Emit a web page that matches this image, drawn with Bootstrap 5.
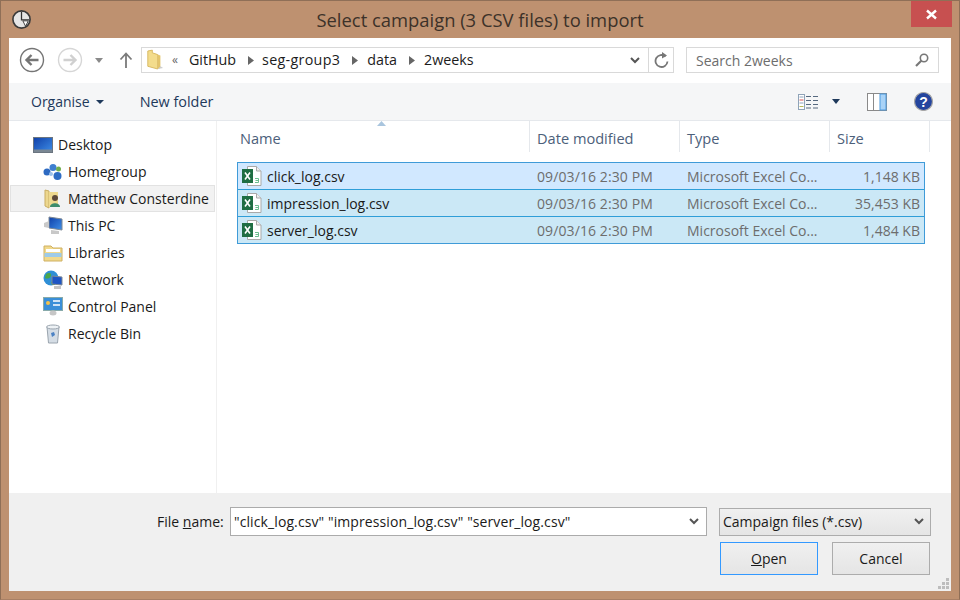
<!DOCTYPE html>
<html lang="en">
<head>
<meta charset="UTF-8">
<title>Select campaign (3 CSV files) to import</title>
<link href="https://cdn.jsdelivr.net/npm/bootstrap@5.3.0/dist/css/bootstrap.min.css" rel="stylesheet">
<style>
html, body { width: 960px; height: 600px; overflow: hidden; }
body { background: #be9170; font-family: "Open Sans", "Noto Sans", sans-serif; font-size: 14px; color: #1a1a1a; }
svg { display: block; flex: none; }
.win-frame { width: 960px; height: 600px; border: 1px solid #8f6f57; border-bottom-color: #a88065; padding: 0 8px 8px; }
.title-bar { height: 37px; }
.app-icon { margin-left: 3px; margin-top: 9px; }
.title-text { font-size: 18.4px; color: #3c3129; line-height: 37px; padding-left: 18px; }
.close-btn { width: 41px; height: 26px; background: #c75050; margin-right: -1px; align-self: flex-start; }
.client { width: 942px; height: 553px; background: #fff; }
.addr-row { height: 45px; padding: 9px 12px 0 10px; }
.nav-btns { width: 122px; height: 26px; }
.nav-fwd, .nav-drop { margin-left: 12px; }
.nav-up { margin-left: 16px; }
.addr-box { width: 533px; height: 26px; border: 1px solid #d9d9d9; }
.crumbs { font-size: 14.3px; color: #1c1c1c; padding-left: 3px; }
.crumb-sep { color: #666; font-size: 12px; margin: 0 11px 0 5px; }
.crumb-arrow { margin: 0 9px 0 12px; }
.crumb-first { margin-right: 8px; }
.crumb-wide { letter-spacing: .3px; }
.refresh-cell { width: 25px; height: 24px; border-left: 1px solid #d9d9d9; }
.search-box { width: 253px; height: 26px; margin-left: 12px; border: 1px solid #d9d9d9; color: #6d6d6d; padding: 0 9px; }
.tool-row { height: 38px; background: #f5f6f7; border-bottom: 1px solid #e5e8ec; padding: 0 18px 0 22px; color: #1e395b; }
.tool-caret { border-left: 4px solid transparent; border-right: 4px solid transparent; border-top: 4px solid #1e395b; margin-left: 6px; }
.tool-new { margin-left: 36px; font-size: 14.4px; }
.view-caret { margin-left: 14px; }
.pane-btn { margin-left: 27px; }
.help-btn { margin-left: 27px; }
.main-area { height: 372px; }
.side-nav { width: 208px; border-right: 1px solid #f0f0f0; padding-top: 10px; }
.side-item { height: 27px; padding-left: 32px; gap: 5px; margin-left: 1px; width: 205px; border: 1px solid transparent; }
.side-top { padding-left: 22px; }
.side-on { background: #f2f2f2; border-color: #e2e2e2; }
.file-pane { padding-left: 14px; }
.col-heads { height: 31px; color: #4c607a; font-size: 14.6px; }
.head-cell { height: 31px; padding-left: 7px; border-right: 1px solid #e5e8ec; position: relative; line-height: 34px; }
.cw-name { width: 299px; padding-left: 9px; }
.cw-date { width: 150px; }
.cw-type { width: 150px; }
.cw-size { width: 100px; }
.sort-arrow { position: absolute; left: 146px; top: 0; }
.file-list { margin-top: 10px; margin-left: 6px; width: 688px; border: 1px solid #3f9bd8; }
.file-row { height: 27px; border-top: 1px solid #2f9ed8; background: #cbe8f6; }
.file-row:first-child { background: #d1e8ff; border-top: 0; height: 26px; }
.f-name { width: 299px; padding-left: 4px; gap: 5px; color: #1a1a1a; }
.f-date { width: 150px; color: #6d6d6d; letter-spacing: .1px; }
.f-type { width: 137px; color: #6d6d6d; white-space: nowrap; }
.f-size { width: 94px; color: #6d6d6d; text-align: right; padding-right: 4px; }
.foot-area { height: 98px; background: #f0f0f0; padding: 14px 20px 0 148px; position: relative; }
.fname-label { width: 73px; white-space: nowrap; }
.fname-box { width: 477px; height: 29px; background: #fff; border: 1px solid #ababab; padding: 0 7px 0 3px; white-space: nowrap; letter-spacing: .1px; }
.type-box { width: 212px; height: 28px; margin-left: 12px; border: 1px solid #acacac; background: linear-gradient(#f0f0f0, #e5e5e5); padding: 0 6px 0 3px; }
.btn-row { margin-top: 6px; padding-right: 1px; gap: 14px; }
.dlg-btn { width: 98px; height: 33px; border: 1px solid #acacac; background: linear-gradient(#f0f0f0, #e5e5e5); color: #1a1a1a; font-size: 14px; padding: 0; border-radius: 0; }
.dlg-btn:hover { border-color: #acacac; background: linear-gradient(#f0f0f0, #e5e5e5); color: #1a1a1a; }
.dlg-default { border: 1px solid #3399ff; }
.grip { position: absolute; right: 2px; bottom: 2px; }
</style>
</head>
<body>
<svg width="0" height="0" class="position-absolute">
  <defs>
    <linearGradient id="screen" x1="0" y1="0" x2="1" y2="1"><stop offset="0" stop-color="#0f3fa8"/><stop offset="1" stop-color="#3f8fe8"/></linearGradient>
    <symbol id="xl" viewBox="0 0 20 20">
      <path d="M5.5 .5H14.5L19 5V19.500H5.500Z" fill="#fff" stroke="#a9a9a9"/>
      <path d="M14.500 .5V5H19" fill="#eee" stroke="#a9a9a9"/>
      <rect x="0" y="3" width="11" height="14" fill="#1f6e43"/>
      <path d="M3 6.500L8 13.500M8 6.500L3 13.500" stroke="#fff" stroke-width="1.600"/>
      <path d="M13 12.500h3.500v4h-3.500M16.500 14.500h-3" fill="none" stroke="#6cbd8f"/>
    </symbol>
    <symbol id="folder-plain" viewBox="0 0 20 24">
      <path d="M2 2 7 1V4L13 6V22L2 19Z" fill="#f3dc8c" stroke="#d6b65c"/>
      <path d="M7 4 16 7V21L13 22V6Z" fill="#e3c46b"/>
      <path d="M13 22 19 21 16 19Z" fill="#ccc"/>
    </symbol>
  </defs>
</svg>

<div class="win-frame">
  <div class="title-bar d-flex">
    <svg class="app-icon" width="19" height="19" viewBox="0 0 21 21">
      <circle cx="10.500" cy="10.500" r="9.500" fill="#e6e6e6" stroke="#3a3a3a" stroke-width="1.800"/>
      <path d="M10.500 2V11H19" fill="none" stroke="#333" stroke-width="1.400"/>
      <path d="M12 12H18L15 18Z" fill="#fff" stroke="#333"/>
    </svg>
    <div class="title-text flex-grow-1 text-center">Select campaign (3 CSV files) to import</div>
    <div class="close-btn d-flex align-items-center justify-content-center">
      <svg width="11" height="11" viewBox="0 0 11 11"><path d="M1 1.500 10 9.500M10 1.500 1 9.500" stroke="#fff" stroke-width="2.400"/></svg>
    </div>
  </div>

  <div class="client d-flex flex-column">
    <div class="addr-row d-flex">
      <div class="nav-btns d-flex align-items-center">
        <svg width="26" height="26" viewBox="0 0 26 26">
          <circle cx="13" cy="13" r="11.500" fill="#fff" stroke="#757575" stroke-width="1.400"/>
          <path d="M19.500 13H8M12.500 8 7.500 13 12.500 18" fill="none" stroke="#757575" stroke-width="2.400"/>
        </svg>
        <svg class="nav-fwd" width="26" height="26" viewBox="0 0 26 26">
          <circle cx="13" cy="13" r="11.500" fill="#fff" stroke="#d6d6d6" stroke-width="1.400"/>
          <path d="M6.500 13H18M13.500 8 18.500 13 13.500 18" fill="none" stroke="#d0d0d0" stroke-width="2.400"/>
        </svg>
        <svg class="nav-drop" width="8" height="5" viewBox="0 0 8 5"><path d="M0 0H8L4 5Z" fill="#8a8a8a"/></svg>
        <svg class="nav-up" width="14" height="16" viewBox="0 0 14 16"><path d="M7 16V2M1.500 7.500 7 1.500 12.500 7.500" fill="none" stroke="#7a7a7a" stroke-width="1.800"/></svg>
      </div>
      <div class="addr-box d-flex align-items-center">
        <svg class="ms-1" width="18" height="24" viewBox="0 0 20 24"><use href="#folder-plain"/></svg>
        <div class="crumbs d-flex align-items-center flex-grow-1">
          <span class="crumb-sep">«</span><span>GitHub</span>
          <svg class="crumb-arrow crumb-first" width="6" height="9" viewBox="0 0 6 9"><path d="M0 0 6 4.500 0 9Z" fill="#666"/></svg><span class="crumb-wide">seg-group3</span>
          <svg class="crumb-arrow" width="6" height="9" viewBox="0 0 6 9"><path d="M0 0 6 4.500 0 9Z" fill="#666"/></svg><span>data</span>
          <svg class="crumb-arrow" width="6" height="9" viewBox="0 0 6 9"><path d="M0 0 6 4.500 0 9Z" fill="#666"/></svg><span>2weeks</span>
        </div>
        <svg class="me-2" width="10" height="7" viewBox="0 0 10 7"><path d="M1 1 5 5 9 1" fill="none" stroke="#555" stroke-width="2"/></svg>
        <div class="refresh-cell d-flex align-items-center justify-content-center">
          <svg width="15" height="16" viewBox="0 0 15 16"><path d="M11.500 4.500A6 6 0 1 0 13.500 9.500" fill="none" stroke="#777" stroke-width="1.800"/><path d="M8 0V6.500L13 3.500Z" fill="#777"/></svg>
        </div>
      </div>
      <div class="search-box d-flex align-items-center justify-content-between">
        <span>Search 2weeks</span>
        <svg width="14" height="14" viewBox="0 0 14 14"><circle cx="9" cy="5" r="3.700" fill="none" stroke="#777" stroke-width="1.600"/><path d="M6.500 7.500 1 13" stroke="#777" stroke-width="2.200"/></svg>
      </div>
    </div>

    <div class="tool-row d-flex align-items-center">
      <span>Organise</span><span class="tool-caret"></span>
      <span class="tool-new">New folder</span>
      <div class="ms-auto d-flex align-items-center">
        <svg width="20" height="16" viewBox="0 0 20 16">
          <rect x=".5" y=".5" width="6" height="15" fill="#fff" stroke="#8fa3b8"/>
          <path d="M1.500 3H5.500" stroke="#8fa3b8"/><path d="M1.500 6H5.500" stroke="#d9534f"/><path d="M1.500 9H5.500" stroke="#8fa3b8"/><path d="M1.500 12.500H5.500" stroke="#b5b95a"/>
          <path d="M8 2.500H13M15 2.500H20M8 6.500H13M15 6.500H20M8 10.500H13M15 10.500H20M8 14H13M15 14H20" stroke="#56697f"/>
        </svg>
        <svg class="view-caret" width="8" height="5" viewBox="0 0 8 5"><path d="M0 0H8L4 5Z" fill="#1e395b"/></svg>
        <svg class="pane-btn" width="20" height="18" viewBox="0 0 20 18">
          <rect x=".5" y=".5" width="19" height="17" fill="#fff" stroke="#8a8a8a"/>
          <path d="M6.500 0V18" stroke="#8a8a8a"/><rect x="13" y="1" width="6" height="16" fill="#a9d3f7" stroke="#4d9be0"/>
        </svg>
        <svg class="help-btn" width="19" height="19" viewBox="0 0 19 19">
          <circle cx="9.500" cy="9.500" r="9" fill="#24459e" stroke="#a7a7a7" stroke-width="1.200"/>
          <text x="9.500" y="14.500" text-anchor="middle" font-family="Liberation Sans, sans-serif" font-size="14" font-weight="700" fill="#fff">?</text>
        </svg>
      </div>
    </div>

    <div class="main-area d-flex">
      <div class="side-nav">
        <div class="side-item side-top d-flex align-items-center">
          <svg width="20" height="16" viewBox="0 0 20 16"><rect x=".5" y=".5" width="19" height="15" fill="url(#screen)" stroke="#6b7580"/><rect x="1" y="12.500" width="18" height="2.500" fill="#7a8793"/></svg>
          <span>Desktop</span>
        </div>
        <div class="side-item d-flex align-items-center">
          <svg width="20" height="18" viewBox="0 0 20 18"><circle cx="10" cy="4.500" r="3.500" fill="#3f7fd0"/><circle cx="4" cy="9" r="3.500" fill="#2d6ac2"/><circle cx="14.500" cy="13" r="4" fill="#2e6dc4"/><circle cx="15.500" cy="6" r="2.500" fill="#6fae4f"/><circle cx="8" cy="11" r="2" fill="#9dc2ea"/></svg>
          <span>Homegroup</span>
        </div>
        <div class="side-item side-on d-flex align-items-center">
          <svg width="20" height="20" viewBox="0 0 20 20"><path d="M2 1 6 2V19L2 17Z" fill="#ecd78f" stroke="#c9ad62"/><rect x="6" y="3" width="9" height="15" fill="#eed98f"/><circle cx="12" cy="9" r="3" fill="#5d4a3a"/><path d="M7 18C7 13 17 13 17 18Z" fill="#3c8c6c"/></svg>
          <span>Matthew Consterdine</span>
        </div>
        <div class="side-item d-flex align-items-center">
          <svg width="20" height="19" viewBox="0 0 20 19"><path d="M6 1 19 3V14L6 12Z" fill="url(#screen)" stroke="#7d8894"/><path d="M1 7 6 5V12L1 11Z" fill="#c9c9c9"/><path d="M8 14 16 15V18H8Z" fill="#c8c8c8"/></svg>
          <span>This PC</span>
        </div>
        <div class="side-item d-flex align-items-center">
          <svg width="20" height="18" viewBox="0 0 20 18"><path d="M1 2H8L10 4H19V17H1Z" fill="#f1d98b" stroke="#cfb063"/><rect x="3" y="5" width="14" height="3" fill="#fff"/><rect x="1.500" y="9" width="17" height="4" fill="#9ecbe8"/></svg>
          <span>Libraries</span>
        </div>
        <div class="side-item d-flex align-items-center">
          <svg width="20" height="20" viewBox="0 0 20 20"><circle cx="8" cy="8" r="7.500" fill="#2f8fd6"/><path d="M3 4C6 2 9 3 8 6S3 9 2 8ZM8 12 12 11V15H9Z" fill="#4aa64a"/><path d="M9 6 19 7V15L9 14Z" fill="#1e55c4" stroke="#7d8894"/><path d="M11 16H18V19H11Z" fill="#c4c4c4"/></svg>
          <span>Network</span>
        </div>
        <div class="side-item d-flex align-items-center">
          <svg width="20" height="19" viewBox="0 0 20 19"><rect x=".5" y=".5" width="19" height="13" fill="#3a8fd8" stroke="#8aa"/><circle cx="5" cy="6" r="2" fill="#f5c24a"/><path d="M10 4H17M10 8H17" stroke="#fff" stroke-width="1.500"/><ellipse cx="10" cy="16" rx="3.500" ry="2.500" fill="#c6c6c6"/></svg>
          <span>Control Panel</span>
        </div>
        <div class="side-item d-flex align-items-center">
          <svg width="20" height="20" viewBox="0 0 20 20"><path d="M4 3H16L14.500 19H5.500Z" fill="#d5dde5" stroke="#9aa4ae"/><ellipse cx="10" cy="3" rx="6.500" ry="2" fill="#eef2f5" stroke="#9aa4ae"/><path d="M8 9 11 8 12 11 9 13Z" fill="#4c82c4"/></svg>
          <span>Recycle Bin</span>
        </div>
      </div>

      <div class="file-pane flex-grow-1">
        <div class="col-heads d-flex">
          <div class="head-cell cw-name">Name
            <svg class="sort-arrow" width="9" height="5" viewBox="0 0 9 5"><path d="M4.500 0 9 5H0Z" fill="#a9c5de"/></svg>
          </div>
          <div class="head-cell cw-date">Date modified</div>
          <div class="head-cell cw-type">Type</div>
          <div class="head-cell cw-size">Size</div>
        </div>
        <div class="file-list">
          <div class="file-row d-flex align-items-center">
            <div class="f-name d-flex align-items-center"><svg width="20" height="20"><use href="#xl"/></svg><span>click_log.csv</span></div>
            <div class="f-date">09/03/16 2:30 PM</div><div class="f-type">Microsoft Excel Co...</div><div class="f-size flex-grow-1">1,148 KB</div>
          </div>
          <div class="file-row d-flex align-items-center">
            <div class="f-name d-flex align-items-center"><svg width="20" height="20"><use href="#xl"/></svg><span>impression_log.csv</span></div>
            <div class="f-date">09/03/16 2:30 PM</div><div class="f-type">Microsoft Excel Co...</div><div class="f-size flex-grow-1">35,453 KB</div>
          </div>
          <div class="file-row d-flex align-items-center">
            <div class="f-name d-flex align-items-center"><svg width="20" height="20"><use href="#xl"/></svg><span>server_log.csv</span></div>
            <div class="f-date">09/03/16 2:30 PM</div><div class="f-type">Microsoft Excel Co...</div><div class="f-size flex-grow-1">1,484 KB</div>
          </div>
        </div>
      </div>
    </div>

    <div class="foot-area">
      <div class="d-flex align-items-center">
        <div class="fname-label">File <u>n</u>ame:</div>
        <div class="fname-box d-flex align-items-center justify-content-between">
          <span>"click_log.csv" "impression_log.csv" "server_log.csv"</span>
          <svg width="10" height="7" viewBox="0 0 10 7"><path d="M1 1 5 5 9 1" fill="none" stroke="#555" stroke-width="2"/></svg>
        </div>
        <div class="type-box d-flex align-items-center justify-content-between">
          <span>Campaign files (*.csv)</span>
          <svg width="10" height="7" viewBox="0 0 10 7"><path d="M1 1 5 5 9 1" fill="none" stroke="#555" stroke-width="2"/></svg>
        </div>
      </div>
      <div class="btn-row d-flex justify-content-end">
        <button class="btn dlg-btn dlg-default"><u>O</u>pen</button>
        <button class="btn dlg-btn">Cancel</button>
      </div>
      <svg class="grip" width="11" height="11" viewBox="0 0 11 11"><path d="M8 0h3v3H8ZM4 4h3v3H4ZM8 4h3v3H8ZM0 8h3v3H0ZM4 8h3v3H4ZM8 8h3v3H8Z" fill="#bdbdbd"/></svg>
    </div>
  </div>
</div>
</body>
</html>
